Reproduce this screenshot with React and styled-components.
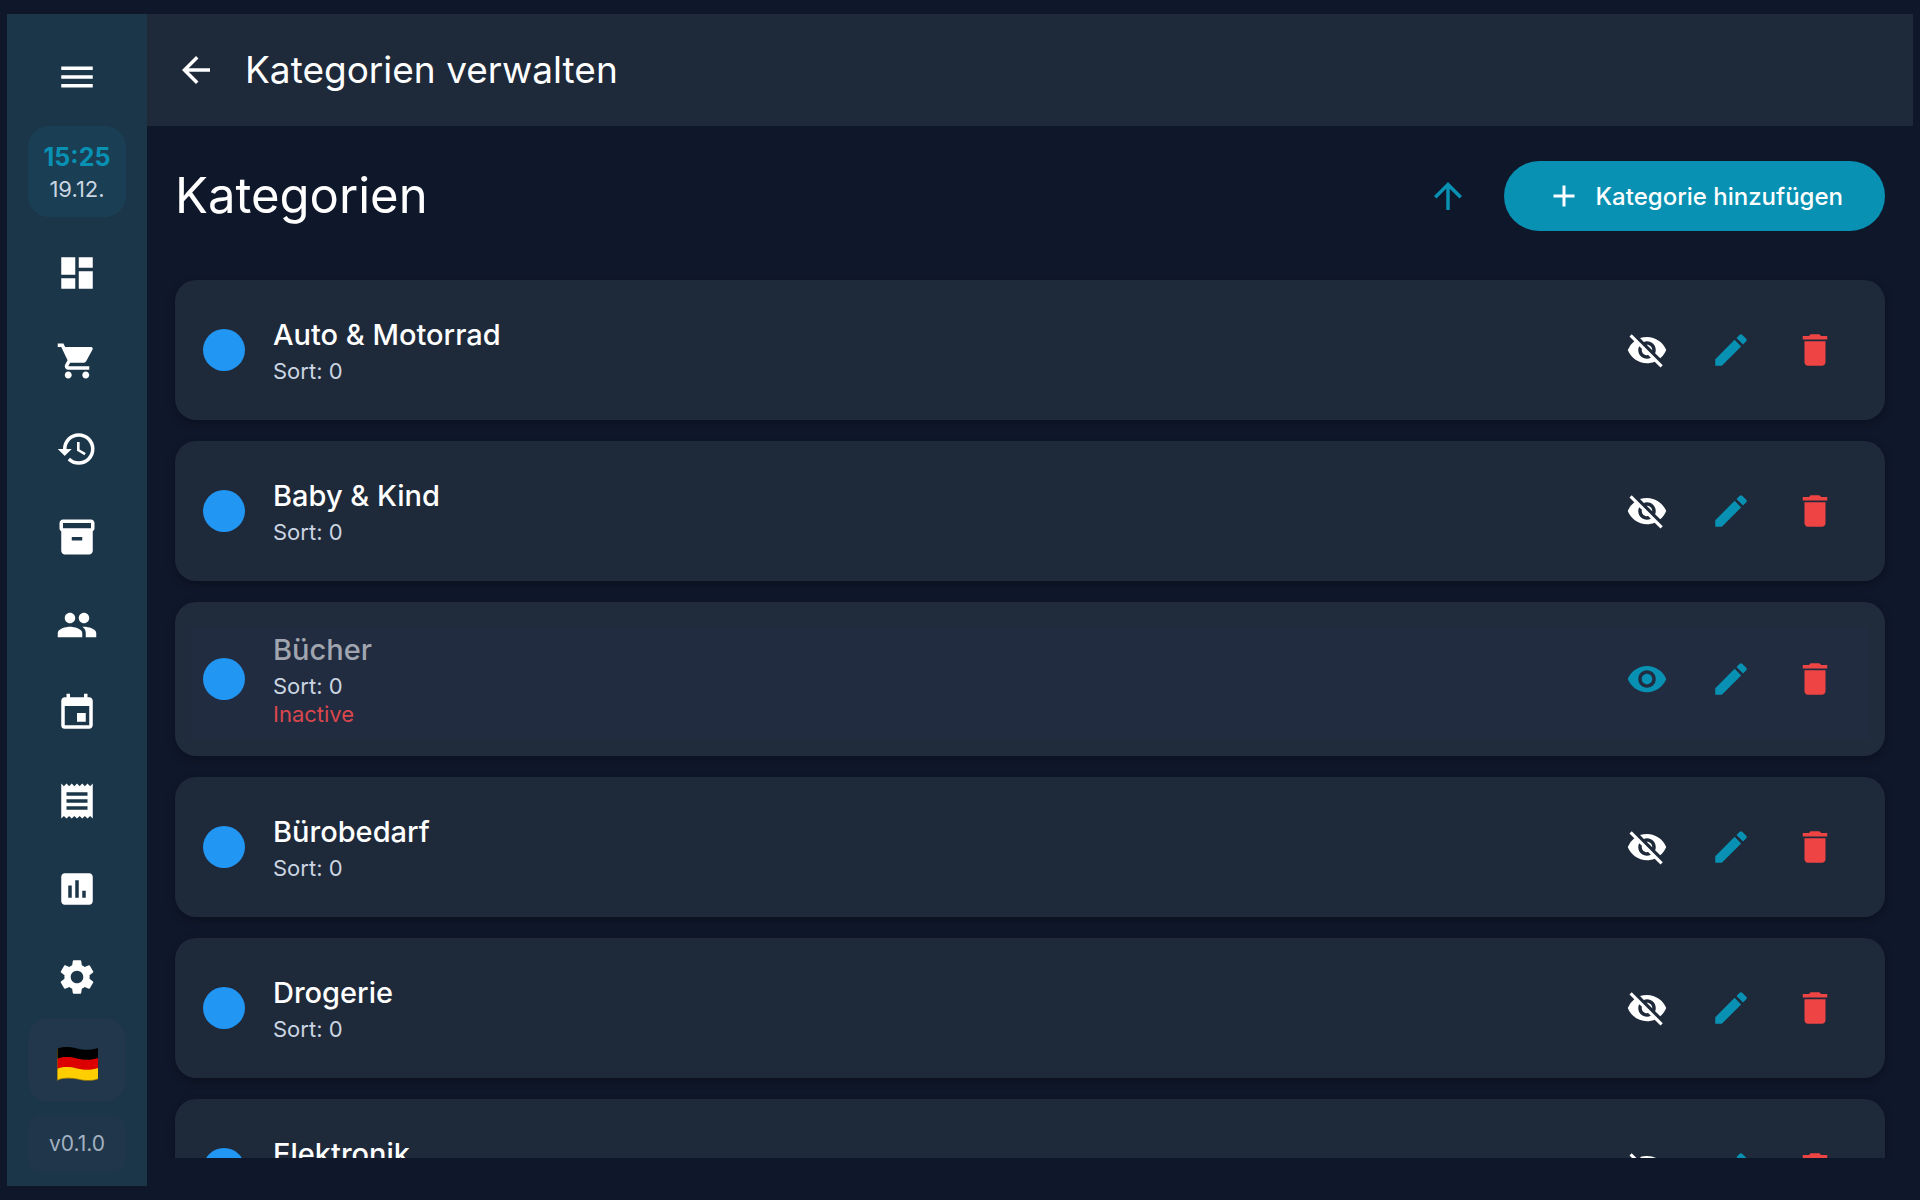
import React, { useState } from "react"
import styled, { createGlobalStyle } from "styled-components"
import {
  MdAdd,
  MdArrowBack,
  MdArrowUpward,
  MdAssessment,
  MdDashboard,
  MdDelete,
  MdEdit,
  MdEvent,
  MdHistory,
  MdInventory2,
  MdMenu,
  MdPeople,
  MdReceipt,
  MdSettings,
  MdShoppingCart,
  MdVisibility,
  MdVisibilityOff,
} from "react-icons/md"

const COLORS = {
  BACK: "#0f172a",
  RAIL: "#1c3649",
  SURFACE: "#1e293a",
  MUTED: "#202b3b",
  MUTED_INNER: "#212c40",
  PRIMARY: "#0891b2",
  DANGER: "#ef4444",
  DOT: "#2196f3",
  TEXT: "#ffffff",
  SUBTEXT: "#cbd5e1",
}

const GlobalStyle = createGlobalStyle`
  *, *::before, *::after {
    box-sizing: border-box;
  }
  body {
    margin: 0;
    background: ${COLORS.BACK};
    color: ${COLORS.TEXT};
    font-family: Inter, "Noto Sans", sans-serif;
  }
  button {
    font-family: inherit;
    border: none;
    padding: 0;
    cursor: pointer;
  }
`
const Shell = styled.div`
  display: flex;
  height: 100vh;
  padding: 14px 7px;
`
const Rail = styled.aside`
  display: flex;
  flex-direction: column;
  align-items: stretch;
  flex: none;
  width: 140px;
  padding: 21px 21px 14px;
  background: ${COLORS.RAIL};
`
const IconBtn = styled.button`
  display: flex;
  align-items: center;
  justify-content: center;
  flex: none;
  width: 84px;
  height: 84px;
  border-radius: 42px;
  background: transparent;
  color: ${props => props.$color || COLORS.TEXT};
`
const MenuBtn = styled(IconBtn)`
  align-self: center;
  margin-bottom: 7px;
`
const Clock = styled.div`
  display: flex;
  flex-direction: column;
  align-items: center;
  justify-content: center;
  height: 91px;
  margin-bottom: 16px;
  border-radius: 21px;
  background: #1a3e53;
`
const Time = styled.time`
  font-size: 25px;
  font-weight: 700;
  line-height: 35px;
  color: ${COLORS.PRIMARY};
`
const DateText = styled.time`
  font-size: 22px;
  line-height: 28px;
  color: ${COLORS.SUBTEXT};
`
const Nav = styled.nav`
  display: flex;
  flex-direction: column;
  gap: 8px;
`
const NavLink = styled.a`
  display: flex;
  align-items: center;
  justify-content: center;
  height: 80px;
  color: ${COLORS.TEXT};
`
const RailFooter = styled.div`
  display: flex;
  flex-direction: column;
  gap: 14px;
  margin-top: auto;
`
const LangBtn = styled.button`
  display: flex;
  align-items: center;
  justify-content: center;
  height: 84px;
  padding: 8px 0 0 2px;
  border-radius: 21px;
  background: #22374b;
`
const Version = styled.div`
  height: 56px;
  border-radius: 14px;
  background: #20364a;
  color: #a3b1c0;
  font-size: 21px;
  line-height: 56px;
  text-align: center;
`
const Main = styled.main`
  display: flex;
  flex-direction: column;
  flex: 1;
  min-width: 0;
`
const TopBar = styled.header`
  display: flex;
  align-items: center;
  flex: none;
  height: 112px;
  padding: 0 7px;
  background: ${COLORS.SURFACE};
`
const BarTitle = styled.h1`
  margin: 0 0 0 7px;
  padding-bottom: 2px;
  font-size: 37px;
  font-weight: 400;
  line-height: 49px;
`
const Content = styled.section`
  display: flex;
  flex-direction: column;
  flex: 1;
  min-height: 0;
  padding: 28px 0;
`
const Heading = styled.div`
  display: flex;
  align-items: center;
  flex: none;
  gap: 14px;
  padding: 0 28px;
`
const Title = styled.h2`
  flex: 1;
  margin: 0;
  padding-bottom: 2px;
  font-size: 49px;
  font-weight: 400;
  line-height: 63px;
`
const AddBtn = styled.button`
  display: flex;
  align-items: center;
  gap: 14px;
  height: 70px;
  padding: 0 42px;
  border-radius: 35px;
  background: ${COLORS.PRIMARY};
  color: ${COLORS.TEXT};
  font-size: 24px;
  font-weight: 500;
`
const List = styled.ul`
  display: flex;
  flex-direction: column;
  flex: 1;
  gap: 21px;
  min-height: 0;
  margin: 0;
  padding: 42px 28px 0;
  overflow: hidden;
  list-style: none;
`
const Card = styled.li`
  display: flex;
  align-items: center;
  flex: none;
  gap: 28px;
  padding: 28px;
  border-radius: 21px;
  background: ${props =>
    props.$inactive
      ? `linear-gradient(${COLORS.MUTED_INNER}, ${COLORS.MUTED_INNER}) 50% 60% /
         calc(100% - 32px) calc(100% - 42px) no-repeat ${COLORS.MUTED}`
      : COLORS.SURFACE};
  box-shadow: 0 3px 8px rgba(0, 0, 0, 0.3);
`
const Dot = styled.span`
  flex: none;
  width: 42px;
  height: 42px;
  border-radius: 50%;
  background: ${COLORS.DOT};
`
const CardText = styled.div`
  flex: 1;
  min-width: 0;
`
const Name = styled.h3`
  margin: 0;
  padding-bottom: 2px;
  font-size: 29px;
  font-weight: 500;
  line-height: 40px;
  color: ${props => (props.$inactive ? "#a0a5af" : COLORS.TEXT)};
`
const Note = styled.p`
  margin: 0;
  font-size: 22px;
  line-height: 28px;
  color: ${props => (props.$danger ? "#d9474d" : COLORS.SUBTEXT)};
`
const Actions = styled.div`
  display: flex;
`

const NAV_ITEMS = [
  { label: "Dashboard", Icon: MdDashboard },
  { label: "Verkauf", Icon: MdShoppingCart },
  { label: "Verlauf", Icon: MdHistory },
  { label: "Inventar", Icon: MdInventory2 },
  { label: "Kunden", Icon: MdPeople },
  { label: "Kalender", Icon: MdEvent },
  { label: "Belege", Icon: MdReceipt },
  { label: "Berichte", Icon: MdAssessment },
  { label: "Einstellungen", Icon: MdSettings },
]

const CATEGORIES = [
  { name: "Auto & Motorrad", sort: 0, active: true },
  { name: "Baby & Kind", sort: 0, active: true },
  { name: "Bücher", sort: 0, active: false },
  { name: "Bürobedarf", sort: 0, active: true },
  { name: "Drogerie", sort: 0, active: true },
  { name: "Elektronik", sort: 0, active: true },
]

function GermanFlag() {
  return (
    <svg width="42" height="36" viewBox="0 0 42 36" aria-hidden="true">
      <path
        d="M0 3C5 .5 12 .5 20 2.500C28 4.500 35 4 41 2V13C35 15 28 15 20 13C12 11 5 11 0 13Z"
        fill="#000000"
      />
      <path
        d="M0 13C5 10.500 12 10.500 20 12.500C28 14.500 35 14 41 12V23C35 25 28 25 20 23C12 21 5 21 0 23Z"
        fill="#dd0000"
      />
      <path
        d="M0 23C5 20.500 12 20.500 20 22.500C28 24.500 35 24 41 22V33C35 35 28 35 20 33C12 31.500 5 32 0 34.500Z"
        fill="#ffce00"
      />
      <path d="M.5 3V34C5 32 12 31.500 20 33C28 35 35 35 41 33" fill="none" stroke="#7a6410" strokeOpacity=".6" />
    </svg>
  )
}

export default function App() {
  const [items, setItems] = useState(CATEGORIES)

  const toggle = name => {
    setItems(items.map(c => (c.name === name ? { ...c, active: !c.active } : c)))
  }
  const remove = name => {
    setItems(items.filter(c => c.name !== name))
  }
  const reverse = () => {
    setItems([...items].reverse())
  }

  return (
    <>
      <GlobalStyle />
      <Shell>
        <Rail>
          <MenuBtn aria-label="Menü">
            <MdMenu size={42} />
          </MenuBtn>
          <Clock>
            <Time>15:25</Time>
            <DateText>19.12.</DateText>
          </Clock>
          <Nav>
            {NAV_ITEMS.map(({ label, Icon }) => (
              <NavLink key={label} href="#" aria-label={label}>
                <Icon size={42} />
              </NavLink>
            ))}
          </Nav>
          <RailFooter>
            <LangBtn aria-label="Deutsch">
              <GermanFlag />
            </LangBtn>
            <Version>v0.1.0</Version>
          </RailFooter>
        </Rail>
        <Main>
          <TopBar>
            <IconBtn aria-label="Zurück">
              <MdArrowBack size={42} />
            </IconBtn>
            <BarTitle>Kategorien verwalten</BarTitle>
          </TopBar>
          <Content>
            <Heading>
              <Title>Kategorien</Title>
              <IconBtn $color={COLORS.PRIMARY} aria-label="Sortierung" onClick={reverse}>
                <MdArrowUpward size={42} />
              </IconBtn>
              <AddBtn>
                <MdAdd size={36} />
                Kategorie hinzufügen
              </AddBtn>
            </Heading>
            <List>
              {items.map(({ name, sort, active }) => (
                <Card key={name} $inactive={!active}>
                  <Dot />
                  <CardText>
                    <Name $inactive={!active}>{name}</Name>
                    <Note>Sort: {sort}</Note>
                    {!active && <Note $danger>Inactive</Note>}
                  </CardText>
                  <Actions>
                    <IconBtn
                      $color={active ? COLORS.TEXT : COLORS.PRIMARY}
                      aria-label={active ? "Deaktivieren" : "Aktivieren"}
                      onClick={() => toggle(name)}
                    >
                      {active ? <MdVisibilityOff size={42} /> : <MdVisibility size={42} />}
                    </IconBtn>
                    <IconBtn $color={COLORS.PRIMARY} aria-label="Bearbeiten">
                      <MdEdit size={42} />
                    </IconBtn>
                    <IconBtn $color={COLORS.DANGER} aria-label="Löschen" onClick={() => remove(name)}>
                      <MdDelete size={42} />
                    </IconBtn>
                  </Actions>
                </Card>
              ))}
            </List>
          </Content>
        </Main>
      </Shell>
    </>
  )
}
